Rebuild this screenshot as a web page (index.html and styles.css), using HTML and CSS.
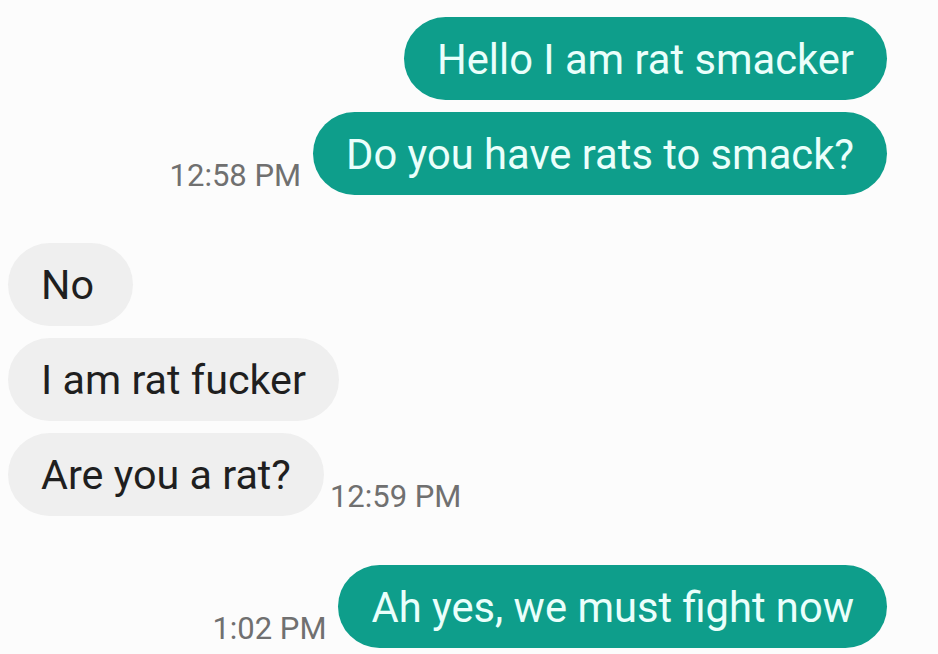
FILE: index.html
```html
<!DOCTYPE html>
<html>
<head>
<meta charset="utf-8">
<link rel="stylesheet" href="styles.css">
</head>
<body>
<div class="thread">
  <div class="group out first">
    <div class="row"><div class="bubble sent">Hello I am rat smacker</div></div>
    <div class="row"><span class="time">12:58 PM</span><div class="bubble sent">Do you have rats to smack?</div></div>
  </div>
  <div class="group in">
    <div class="row"><div class="bubble recv">No</div></div>
    <div class="row"><div class="bubble recv">I am rat fucker</div></div>
    <div class="row"><div class="bubble recv">Are you a rat?</div><span class="time">12:59 PM</span></div>
  </div>
  <div class="group out last">
    <div class="row"><span class="time">1:02 PM</span><div class="bubble sent">Ah yes, we must fight now</div></div>
  </div>
</div>
</body>
</html>
```
FILE: styles.css
```css
html, body {
  margin: 0;
  padding: 0;
  background: #fcfcfc;
  overflow: hidden;
}
body {
  font-family: Roboto, "Noto Sans", sans-serif;
  width: 938px;
  height: 654px;
}
.thread {
  display: flex;
  flex-direction: column;
  padding-top: 17px;
}
.group {
  display: flex;
  flex-direction: column;
  gap: 12px;
}
.group.out {
  align-items: flex-end;
  padding-right: 51px;
}
.group.in {
  align-items: flex-start;
  padding-left: 8px;
  margin-top: 48px;
}
.group.last {
  margin-top: 49px;
}
.row {
  display: flex;
  align-items: flex-end;
  gap: 12px;
}
.group.in .row {
  gap: 6px;
}
.bubble {
  height: 83px;
  box-sizing: border-box;
  padding: 2px 33px 0;
  border-radius: 42px;
  font-size: 41.7px;
  line-height: 81px;
  white-space: nowrap;
}
.sent {
  background: #0e9e8b;
  color: #eafffb;
}
.recv {
  background: #efefef;
  color: #1f1f1f;
  font-size: 41.3px;
  min-width: 125px;
}
.time {
  font-size: 31px;
  color: #707070;
  line-height: 30px;
  padding-bottom: 4px;
  white-space: nowrap;
}
```
